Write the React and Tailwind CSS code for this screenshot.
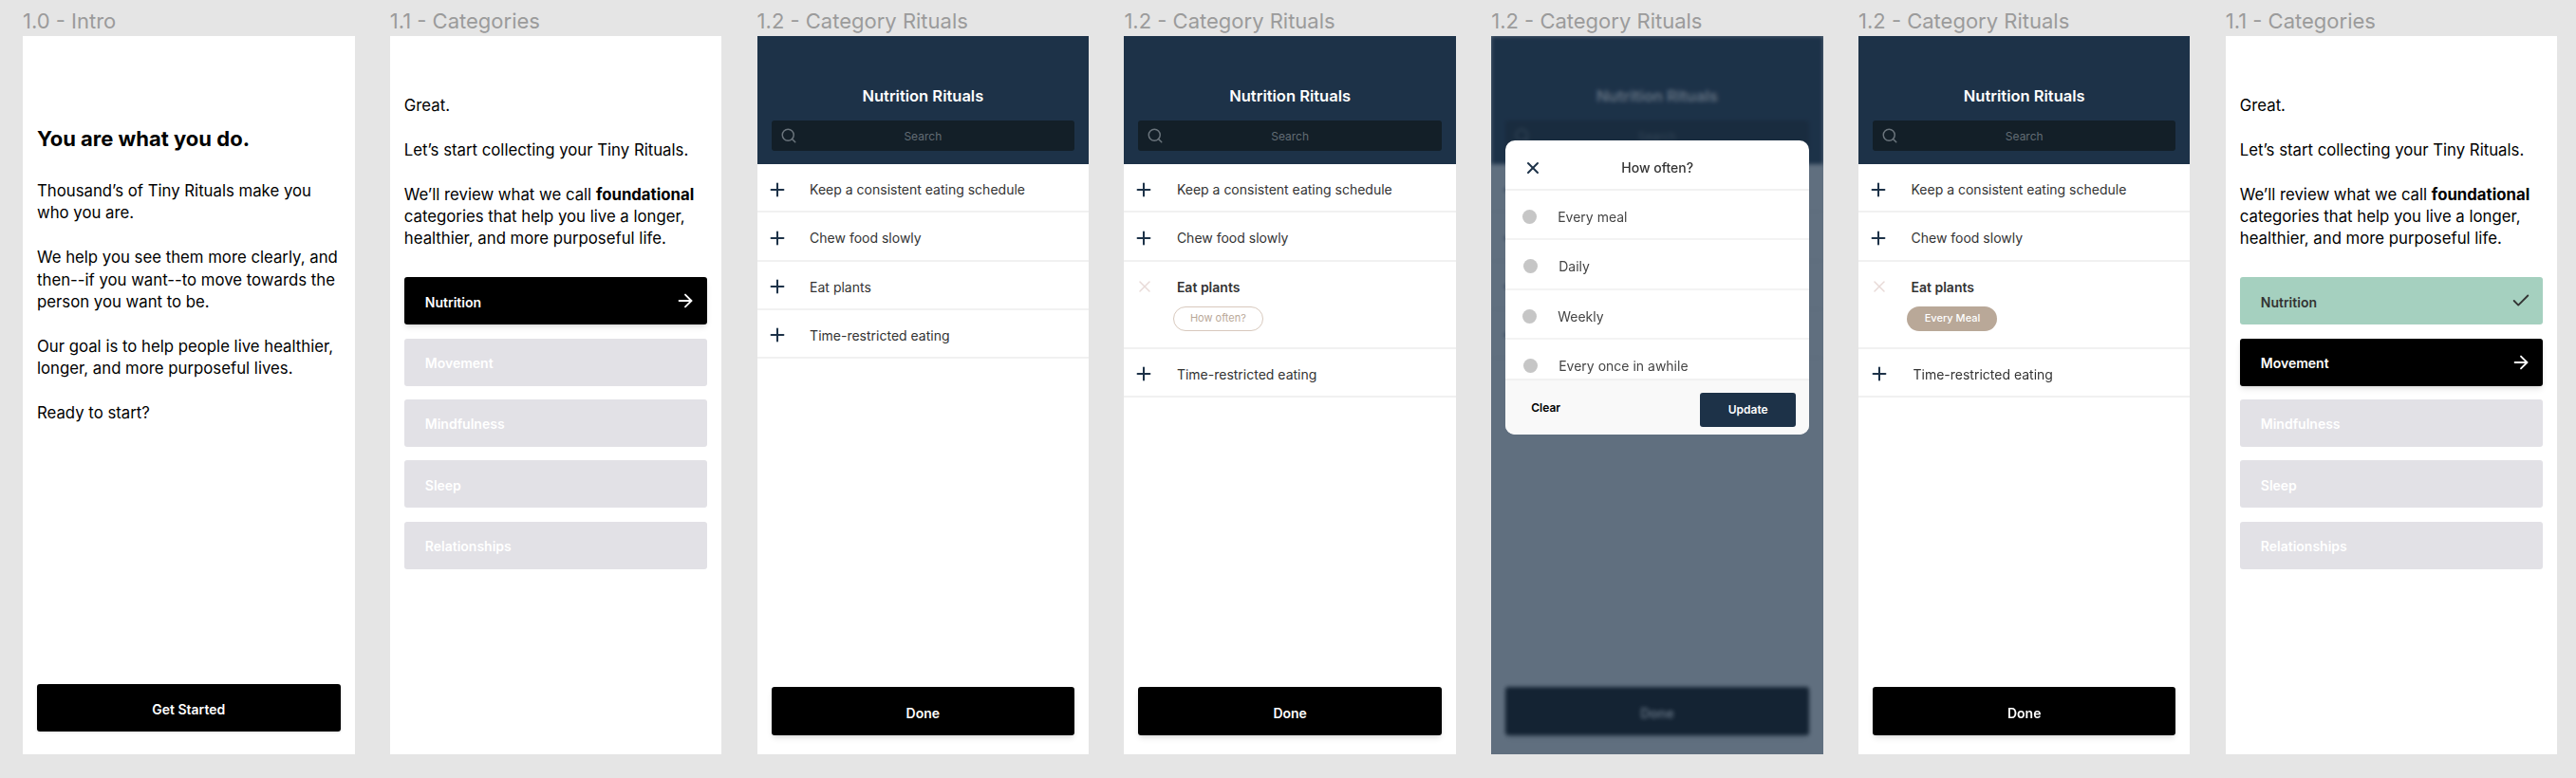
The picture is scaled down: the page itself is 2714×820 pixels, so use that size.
import React from 'react';
import { ArrowRight, Check, Plus, Search, X } from 'lucide-react';

const rituals = ['Keep a consistent eating schedule', 'Chew food slowly', 'Eat plants', 'Time-restricted eating'];
const categories = ['Nutrition', 'Movement', 'Mindfulness', 'Sleep', 'Relationships'];
const frequencies = [
    { label: 'Every meal', nudge: '' },
    { label: 'Daily', nudge: 'ml-px' },
    { label: 'Weekly', nudge: '' },
    { label: 'Every once in awhile', nudge: 'ml-px' },
];

const Frame = ({ title, children, className = '' }) => (
    <div className="w-[349.5px] shrink-0">
        <div className="h-[38px] flex items-center pt-[6px] text-[22px] leading-none text-[#9b9b9b] whitespace-nowrap">{title}</div>
        <div className={`relative h-[757px] bg-white overflow-hidden flex flex-col ${className}`}>{children}</div>
    </div>
);

const Intro = () => (
    <Frame title="1.0 - Intro" className="px-[15px] pb-[24px]">
        <h1 className="mt-[95px] text-[22px] leading-[27px] font-bold text-black">You are what you do.</h1>
        <div className="mt-[30px] text-[16.75px] leading-[23.4px] text-black flex flex-col gap-[23.4px]">
            <p>Thousand’s of Tiny Rituals make you who you are.</p>
            <p>We help you see them more clearly, and then--if you want--to move towards the person you want to be.</p>
            <p>Our goal is to help people live healthier, longer, and more purposeful lives.</p>
            <p>Ready to start?</p>
        </div>
        <button className="mt-auto h-[50px] pt-[2px] bg-black rounded-[3px] text-white text-[14px] font-semibold shadow-sm">Get Started</button>
    </Frame>
);

const CategoryButton = ({ name, state }) => {
    const styles = {
        done: 'bg-[#a5d0bf] text-[#333333]',
        active: 'bg-black text-white shadow-md',
        locked: 'bg-[#e2e1e6] text-white',
    };
    return (
        <div className={`h-[50px] rounded-[3px] flex items-center justify-between pl-[22px] pr-[12px] text-[14px] font-semibold ${styles[state]}`}>
            <span className="pt-[2px]">{name}</span>
            {state === 'done' && <Check size={22} strokeWidth={2} />}
            {state === 'active' && <ArrowRight size={22} strokeWidth={2} />}
        </div>
    );
};

const Categories = ({ active }) => (
    <Frame title="1.1 - Categories" className="px-[15px]">
        <div className="mt-[62px] text-[16.75px] leading-[23.4px] text-black flex flex-col gap-[23.4px]">
            <p>Great.</p>
            <p>Let’s start collecting your Tiny Rituals.</p>
            <p>We’ll review what we call <b className="font-bold">foundational</b> categories that help you live a longer, healthier, and more purposeful life.</p>
        </div>
        <div className="mt-[28.5px] flex flex-col gap-[14.3px]">
            {categories.map((name, index) => (
                <CategoryButton key={name} name={name} state={index < active ? 'done' : index === active ? 'active' : 'locked'} />
            ))}
        </div>
    </Frame>
);

const RitualRow = ({ label, selected, pill, nudge = '' }) => (
    <div className={`border-b-2 border-[#f1f1f1] flex items-start pl-[15px] pt-[2px] ${selected ? 'h-[92px]' : 'h-[51.3px]'}`}>
        <div className={`w-[40.5px] h-[49px] shrink-0 flex items-center ${nudge}`}>
            {selected ? (
                <X size={20} strokeWidth={1.8} className="text-[#e8dad7] -ml-[3px]" />
            ) : (
                <Plus size={22} strokeWidth={2.2} className="text-[#1d3248] -ml-[5px]" />
            )}
        </div>
        <div className={`min-w-0 ${nudge}`}>
            <div className={`h-[49px] flex items-center text-[14px] text-[#333333] ${selected ? 'font-semibold' : ''}`}>{label}</div>
            {pill === 'empty' && (
                <div className="-mt-[4px] -ml-[4px] w-[95px] h-[26px] rounded-full border border-[#d8c9bd] flex items-center justify-center text-[11px] text-[#b9a898]">How often?</div>
            )}
            {pill === 'filled' && (
                <div className="-mt-[4px] -ml-[4px] w-[95px] h-[26px] rounded-full bg-[#b9a898] flex items-center justify-center text-[11px] font-medium text-white">Every Meal</div>
            )}
        </div>
    </div>
);

const RitualsBody = ({ pill }) => (
    <>
        <div className="h-[135px] bg-[#1d3248] px-[15px] flex flex-col shrink-0">
            <div className="mt-[52px] h-[22px] flex items-center justify-center text-[16.5px] font-semibold text-white">Nutrition Rituals</div>
            <div className="mt-[15px] relative h-[32px] pt-[2px] rounded-[3px] bg-[#131f28] flex items-center justify-center text-[12px] text-[#626c74]">
                <Search size={18} strokeWidth={2} className="absolute left-[9px] top-[7px] text-[#6a747c]" />
                Search
            </div>
        </div>
        <div className="flex-1 flex flex-col">
            {rituals.map((label, index) => (
                <RitualRow
                    key={label}
                    label={label}
                    selected={pill && index === 2}
                    pill={index === 2 ? pill : undefined}
                    nudge={pill === 'filled' && index === 3 ? 'ml-px' : ''}
                />
            ))}
        </div>
        <div className="px-[15px] pb-[20px]">
            <button className="w-full h-[51px] pt-[3px] bg-black rounded-[3px] text-white text-[14px] font-semibold shadow-md">Done</button>
        </div>
    </>
);

const Rituals = ({ pill }) => (
    <Frame title="1.2 - Category Rituals">
        <RitualsBody pill={pill} />
    </Frame>
);

const FrequencyModal = () => (
    <Frame title="1.2 - Category Rituals">
        <div className="h-full flex flex-col blur-[2px]">
            <RitualsBody />
        </div>
        <div className="absolute inset-0 bg-[#1d3248]/70" />
        <div className="absolute left-[15px] top-[110px] w-[320px] h-[310px] rounded-[10px] bg-white overflow-hidden flex flex-col">
            <div className="relative h-[53px] pt-[6px] border-b-2 border-[#f1f1f1] flex items-center justify-center text-[14px] font-medium text-[#333333] shrink-0">
                <X size={20} strokeWidth={2.4} className="absolute left-[19px] text-[#1d3248]" />
                How often?
            </div>
            <div className="flex-1 overflow-hidden">
                {frequencies.map((item) => (
                    <div key={item.label} className="h-[52.3px] pt-[5px] border-b-2 border-[#f3f3f3] flex items-center pl-[18px] text-[14px] text-[#444444]">
                        <span className={`w-[15px] h-[15px] rounded-full bg-[#c6c6c6] mr-[22px] ${item.nudge}`} />
                        {item.label}
                    </div>
                ))}
            </div>
            <div className="h-[59px] bg-[#f9f9f9] border-t-2 border-[#f1f1f1] flex items-start justify-between pl-[27px] pr-[14px] pt-[13px] shrink-0">
                <span className="mt-[6px] text-[12px] font-semibold text-black leading-[20px]">Clear</span>
                <button className="w-[101px] h-[36px] rounded-[3px] bg-[#1d3248] text-white text-[12px] font-semibold">Update</button>
            </div>
        </div>
    </Frame>
);

export default function App() {
    return (
        <div className="w-[2714px] h-[820px] bg-[#e5e5e5] overflow-hidden flex gap-[37.3px] pl-[24px] font-['Inter',sans-serif]">
            <Intro />
            <Categories active={0} />
            <Rituals />
            <Rituals pill="empty" />
            <FrequencyModal />
            <Rituals pill="filled" />
            <Categories active={1} />
        </div>
    );
}
